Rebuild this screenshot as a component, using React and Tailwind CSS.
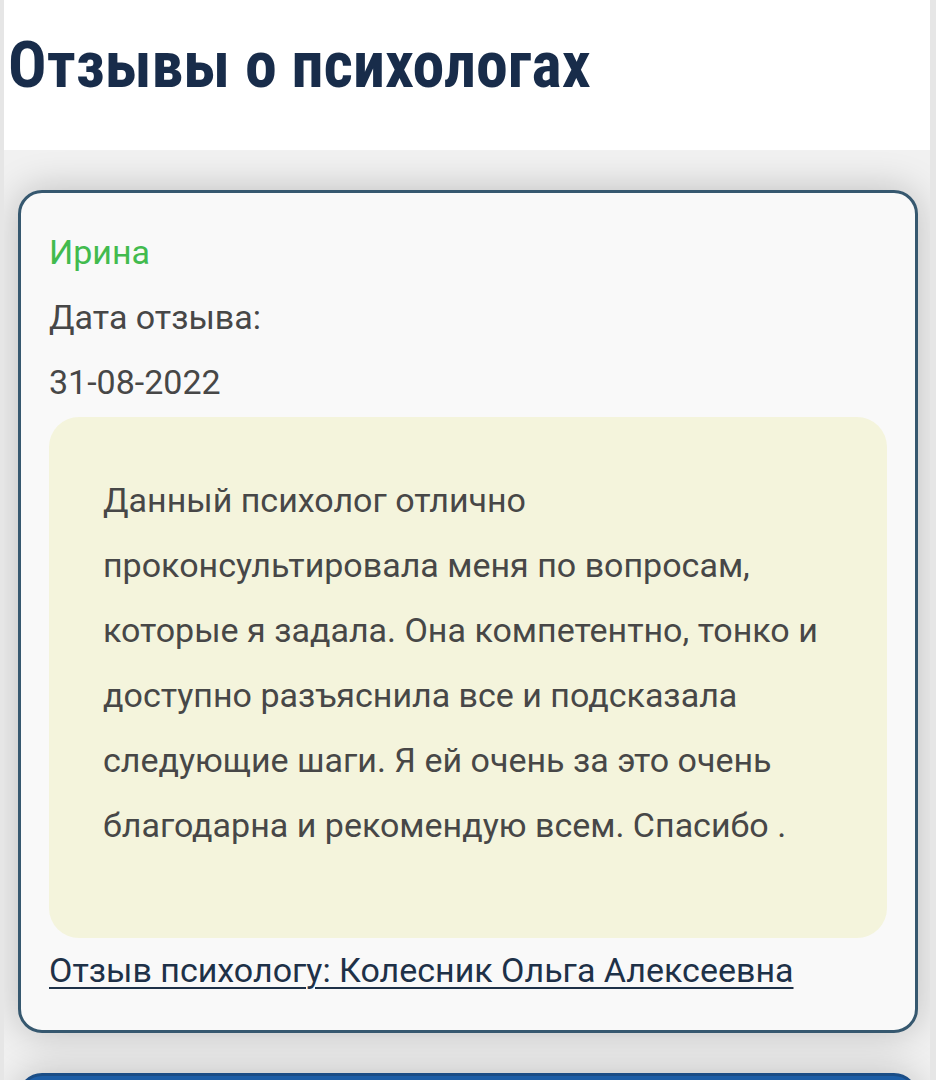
export default function App() {
  return (
    <div className="min-h-screen bg-white border-l-4 border-r-[6px] border-[#e6e6e6] font-['Roboto',sans-serif] overflow-hidden">
      {/* Page title */}
      <div className="h-[150px] pl-1 pt-[34px]">
        <h1 className="font-['Roboto_Condensed','Liberation_Sans_Narrow','Roboto',sans-serif] font-bold text-[64px] leading-[64px] text-[#182c4a]">
          Отзывы о психологах
        </h1>
      </div>

      {/* Reviews list */}
      <div className="bg-[#f1f1f1] pt-10 pl-[14px] pr-3 flex flex-col gap-10">
        <article className="rounded-[24px] border-[3px] border-[#36586f] bg-[#f9f9f9] px-[28px] pt-[27px] pb-[27px] shadow-[0_0_38px_rgba(0,0,0,0.22)]">
          <div className="text-[34px] leading-[65px] text-[#42bb4e]">Ирина</div>
          <div className="text-[34px] leading-[65px] text-[#474747]">Дата отзыва:</div>
          <div className="text-[34px] leading-[65px] text-[#474747]">31-08-2022</div>

          <div className="mt-[2px] rounded-[30px] bg-[#f4f4dc] px-[54px] pt-[51px] pb-[80px]">
            <p className="text-[34px] leading-[65px] text-[#474747]">
              Данный психолог отлично проконсультировала меня по вопросам, которые я задала. Она компетентно, тонко и доступно разъяснила все и подсказала следующие шаги. Я ей очень за это очень благодарна и рекомендую всем. Спасибо .
            </p>
          </div>

          <a
            href="#"
            className="block text-[34px] leading-[65px] text-[#1e3148] underline decoration-2 underline-offset-[5px]"
          >
            Отзыв психологу: Колесник Ольга Алексеевна
          </a>
        </article>

        <article className="h-[200px] rounded-t-[24px] border-[3px] border-[#1a4d86] bg-[#1d5ea6] shadow-[0_0_38px_rgba(0,0,0,0.22)]" />
      </div>
    </div>
  );
}
